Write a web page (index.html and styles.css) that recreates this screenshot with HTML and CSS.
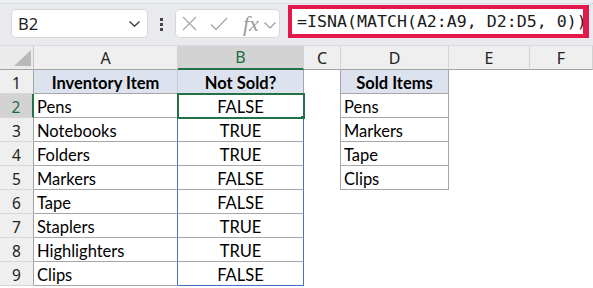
FILE: index.html
```html
<!DOCTYPE html>
<html lang="en">
<head>
  <meta charset="UTF-8" />
  <title>ISNA MATCH - Sheet</title>
  <link rel="stylesheet" href="styles.css">
</head>
<body>
  <div class="toolbar">
    <div class="strip"></div>
    <div class="bar">
      <div class="namebox">
        <span>B2</span>
        <svg width="11" height="6" viewBox="0 0 11 6"><path d="M0.5 0.5 L5.5 5.2 L10.5 0.5" fill="none" stroke="#333" stroke-width="1.3"/></svg>
      </div>
      <div class="dots"><i></i><i></i><i></i></div>
      <div class="fxbox">
        <svg class="ic-x" width="15" height="15" viewBox="0 0 15 15"><path d="M1 1 L14 14 M14 1 L1 14" stroke="#a8a8a8" stroke-width="1.3" fill="none"/></svg>
        <svg class="ic-ok" width="18" height="14" viewBox="0 0 18 14"><path d="M1 7.5 L6 12.5 L17 1" stroke="#a8a8a8" stroke-width="1.3" fill="none"/></svg>
        <span class="fx">fx</span>
        <svg class="ic-dd" width="12" height="7" viewBox="0 0 12 7"><path d="M0.5 0.5 L6 6 L11.5 0.5" fill="none" stroke="#9a9a9a" stroke-width="1.2"/></svg>
      </div>
      <div class="formula">=ISNA(MATCH(A2:A9, D2:D5, 0))</div>
    </div>
  </div>

  <div class="sheet">
    <!-- column headers -->
    <div class="c corner"><svg width="17" height="16" viewBox="0 0 17 16"><polygon points="17,0 17,16 0,16" fill="#b9b9b9"/></svg></div>
    <div class="c colhdr">A</div>
    <div class="c colhdr sel">B</div>
    <div class="c colhdr">C</div>
    <div class="c colhdr">D</div>
    <div class="c colhdr">E</div>
    <div class="c colhdr">F</div>

    <!-- row 1 -->
    <div class="c rowhdr">1</div>
    <div class="c tbl th soft-r">Inventory Item</div>
    <div class="c tbl th">Not Sold?</div>
    <div class="c edge"></div>
    <div class="c tbl th">Sold Items</div>
    <div class="c"></div>
    <div class="c"></div>

    <!-- row 2 -->
    <div class="c rowhdr sel">2</div>
    <div class="c tbl blue-r">Pens</div>
    <div class="c tbl mid blue-r active">FALSE</div>
    <div class="c edge"></div>
    <div class="c tbl">Pens</div>
    <div class="c"></div>
    <div class="c"></div>

    <!-- row 3 -->
    <div class="c rowhdr">3</div>
    <div class="c tbl blue-r">Notebooks</div>
    <div class="c tbl mid blue-r">TRUE</div>
    <div class="c edge"></div>
    <div class="c tbl">Markers</div>
    <div class="c"></div>
    <div class="c"></div>

    <!-- row 4 -->
    <div class="c rowhdr">4</div>
    <div class="c tbl blue-r">Folders</div>
    <div class="c tbl mid blue-r">TRUE</div>
    <div class="c edge"></div>
    <div class="c tbl">Tape</div>
    <div class="c"></div>
    <div class="c"></div>

    <!-- row 5 -->
    <div class="c rowhdr">5</div>
    <div class="c tbl blue-r">Markers</div>
    <div class="c tbl mid blue-r">FALSE</div>
    <div class="c edge"></div>
    <div class="c tbl">Clips</div>
    <div class="c"></div>
    <div class="c"></div>

    <!-- row 6 -->
    <div class="c rowhdr">6</div>
    <div class="c tbl blue-r">Tape</div>
    <div class="c tbl mid blue-r">FALSE</div>
    <div class="c"></div>
    <div class="c"></div>
    <div class="c"></div>
    <div class="c"></div>

    <!-- row 7 -->
    <div class="c rowhdr">7</div>
    <div class="c tbl blue-r">Staplers</div>
    <div class="c tbl mid blue-r">TRUE</div>
    <div class="c"></div>
    <div class="c"></div>
    <div class="c"></div>
    <div class="c"></div>

    <!-- row 8 -->
    <div class="c rowhdr">8</div>
    <div class="c tbl blue-r">Highlighters</div>
    <div class="c tbl mid blue-r">TRUE</div>
    <div class="c"></div>
    <div class="c"></div>
    <div class="c"></div>
    <div class="c"></div>

    <!-- row 9 -->
    <div class="c rowhdr">9</div>
    <div class="c tbl blue-r">Clips</div>
    <div class="c tbl mid blue-r blue-b">FALSE</div>
    <div class="c"></div>
    <div class="c"></div>
    <div class="c"></div>
    <div class="c"></div>
  </div>
</body>
</html>
```

FILE: styles.css
```css
body {
  margin: 0;
  width: 593px;
  overflow: hidden;
  background: #fff;
  font-family: "Noto Sans", sans-serif;
}

/* formula bar area */
.toolbar {
  height: 46px;
  box-sizing: border-box;
  background: #e8eaed;
  border-bottom: 1px solid #dadcdf;
}
.strip {
  height: 3px;
  background: #eceef1;
  border-bottom: 1px dotted #c8cacd;
}
.bar {
  display: flex;
  align-items: flex-start;
}
.namebox {
  margin: 5px 0 0 11px;
  width: 137px;
  height: 29px;
  box-sizing: border-box;
  background: #fff;
  border: 1px solid #d6d8db;
  border-radius: 5px;
  display: flex;
  align-items: center;
  justify-content: space-between;
  padding: 0 7px 0 6px;
  font-size: 16.5px;
  color: #1f1f1f;
}
.dots {
  margin: 14px 0 0 12px;
  display: flex;
  flex-direction: column;
  gap: 2px;
}
.dots i {
  display: block;
  width: 3px;
  height: 3px;
  background: #454545;
}
.fxbox {
  margin: 5px 0 0 12px;
  width: 105px;
  height: 29px;
  box-sizing: border-box;
  background: #fff;
  border: 1px solid #d6d8db;
  border-radius: 5px;
  display: flex;
  align-items: center;
  padding-left: 6px;
}
.ic-ok {
  margin-left: 13px;
}
.fx {
  margin-left: 15px;
  font-family: "Liberation Serif", serif;
  font-style: italic;
  font-size: 22px;
  color: #9a9a9a;
  line-height: 1;
}
.ic-dd {
  margin-left: 5px;
  margin-top: 3px;
}
.formula {
  margin: 1px 0 0 8px;
  width: 301px;
  height: 33px;
  box-sizing: border-box;
  border: 4px solid #e3194b;
  border-right-width: 6px;
  background: #fff;
  overflow: hidden;
  white-space: nowrap;
  padding-left: 5px;
  font-family: "DejaVu Sans Mono", monospace;
  font-size: 16.6px;
  line-height: 25px;
  color: #1a1a1a;
}

/* sheet grid */
.sheet {
  display: grid;
  grid-template-columns: 34px 144px 126px 37px 108px 81px 63px;
  grid-auto-rows: 24px;
  font-family: Lato, sans-serif;
  font-size: 16.5px;
}
.c {
  box-sizing: border-box;
  display: flex;
  align-items: center;
  overflow: hidden;
  white-space: nowrap;
  color: #000;
}
.corner {
  background: #ebebeb;
  border-right: 1px solid #c8c8c8;
  border-bottom: 1px solid #a3a3a3;
  justify-content: flex-end;
  align-items: flex-end;
  padding: 0 2px 3px 0;
}
.colhdr {
  background: #efefef;
  border-right: 1px solid #d2d2d2;
  border-bottom: 1px solid #a3a3a3;
  justify-content: center;
  font-family: "Noto Sans", sans-serif;
  font-size: 16px;
  color: #222;
}
.colhdr.sel {
  background: #d3d3d3;
  color: #1e6b3f;
  border-bottom: 2px solid #217346;
}
.rowhdr {
  background: #efefef;
  border-right: 1px solid #a3a3a3;
  border-bottom: 1px solid #d8d8d8;
  justify-content: center;
  padding-top: 3px;
  font-family: "Noto Sans", sans-serif;
  font-size: 15.5px;
  color: #222;
}
.rowhdr.sel {
  background: #d3d3d3;
  color: #1e6b3f;
  border-right: 2px solid #217346;
}
.tbl {
  border-right: 1px solid #a6a6a6;
  border-bottom: 1px solid #a6a6a6;
  padding-left: 3px;
  padding-top: 3px;
}
.th {
  background: #dde3ee;
  font-weight: 700;
  justify-content: center;
  padding-left: 0;
}
.soft-r {
  border-right-color: #c4cbd6;
}
.mid {
  justify-content: center;
  padding-left: 0;
}
.blue-r {
  border-right-color: #4472c4;
}
.blue-b {
  border-bottom-color: #4472c4;
}
.edge {
  border-right: 1px solid #a6a6a6;
}
.active {
  position: relative;
  outline: 2px solid #217346;
  outline-offset: -1px;
}
.active::after {
  content: "";
  position: absolute;
  right: -4px;
  bottom: -5px;
  width: 6px;
  height: 6px;
  background: #217346;
}
```
